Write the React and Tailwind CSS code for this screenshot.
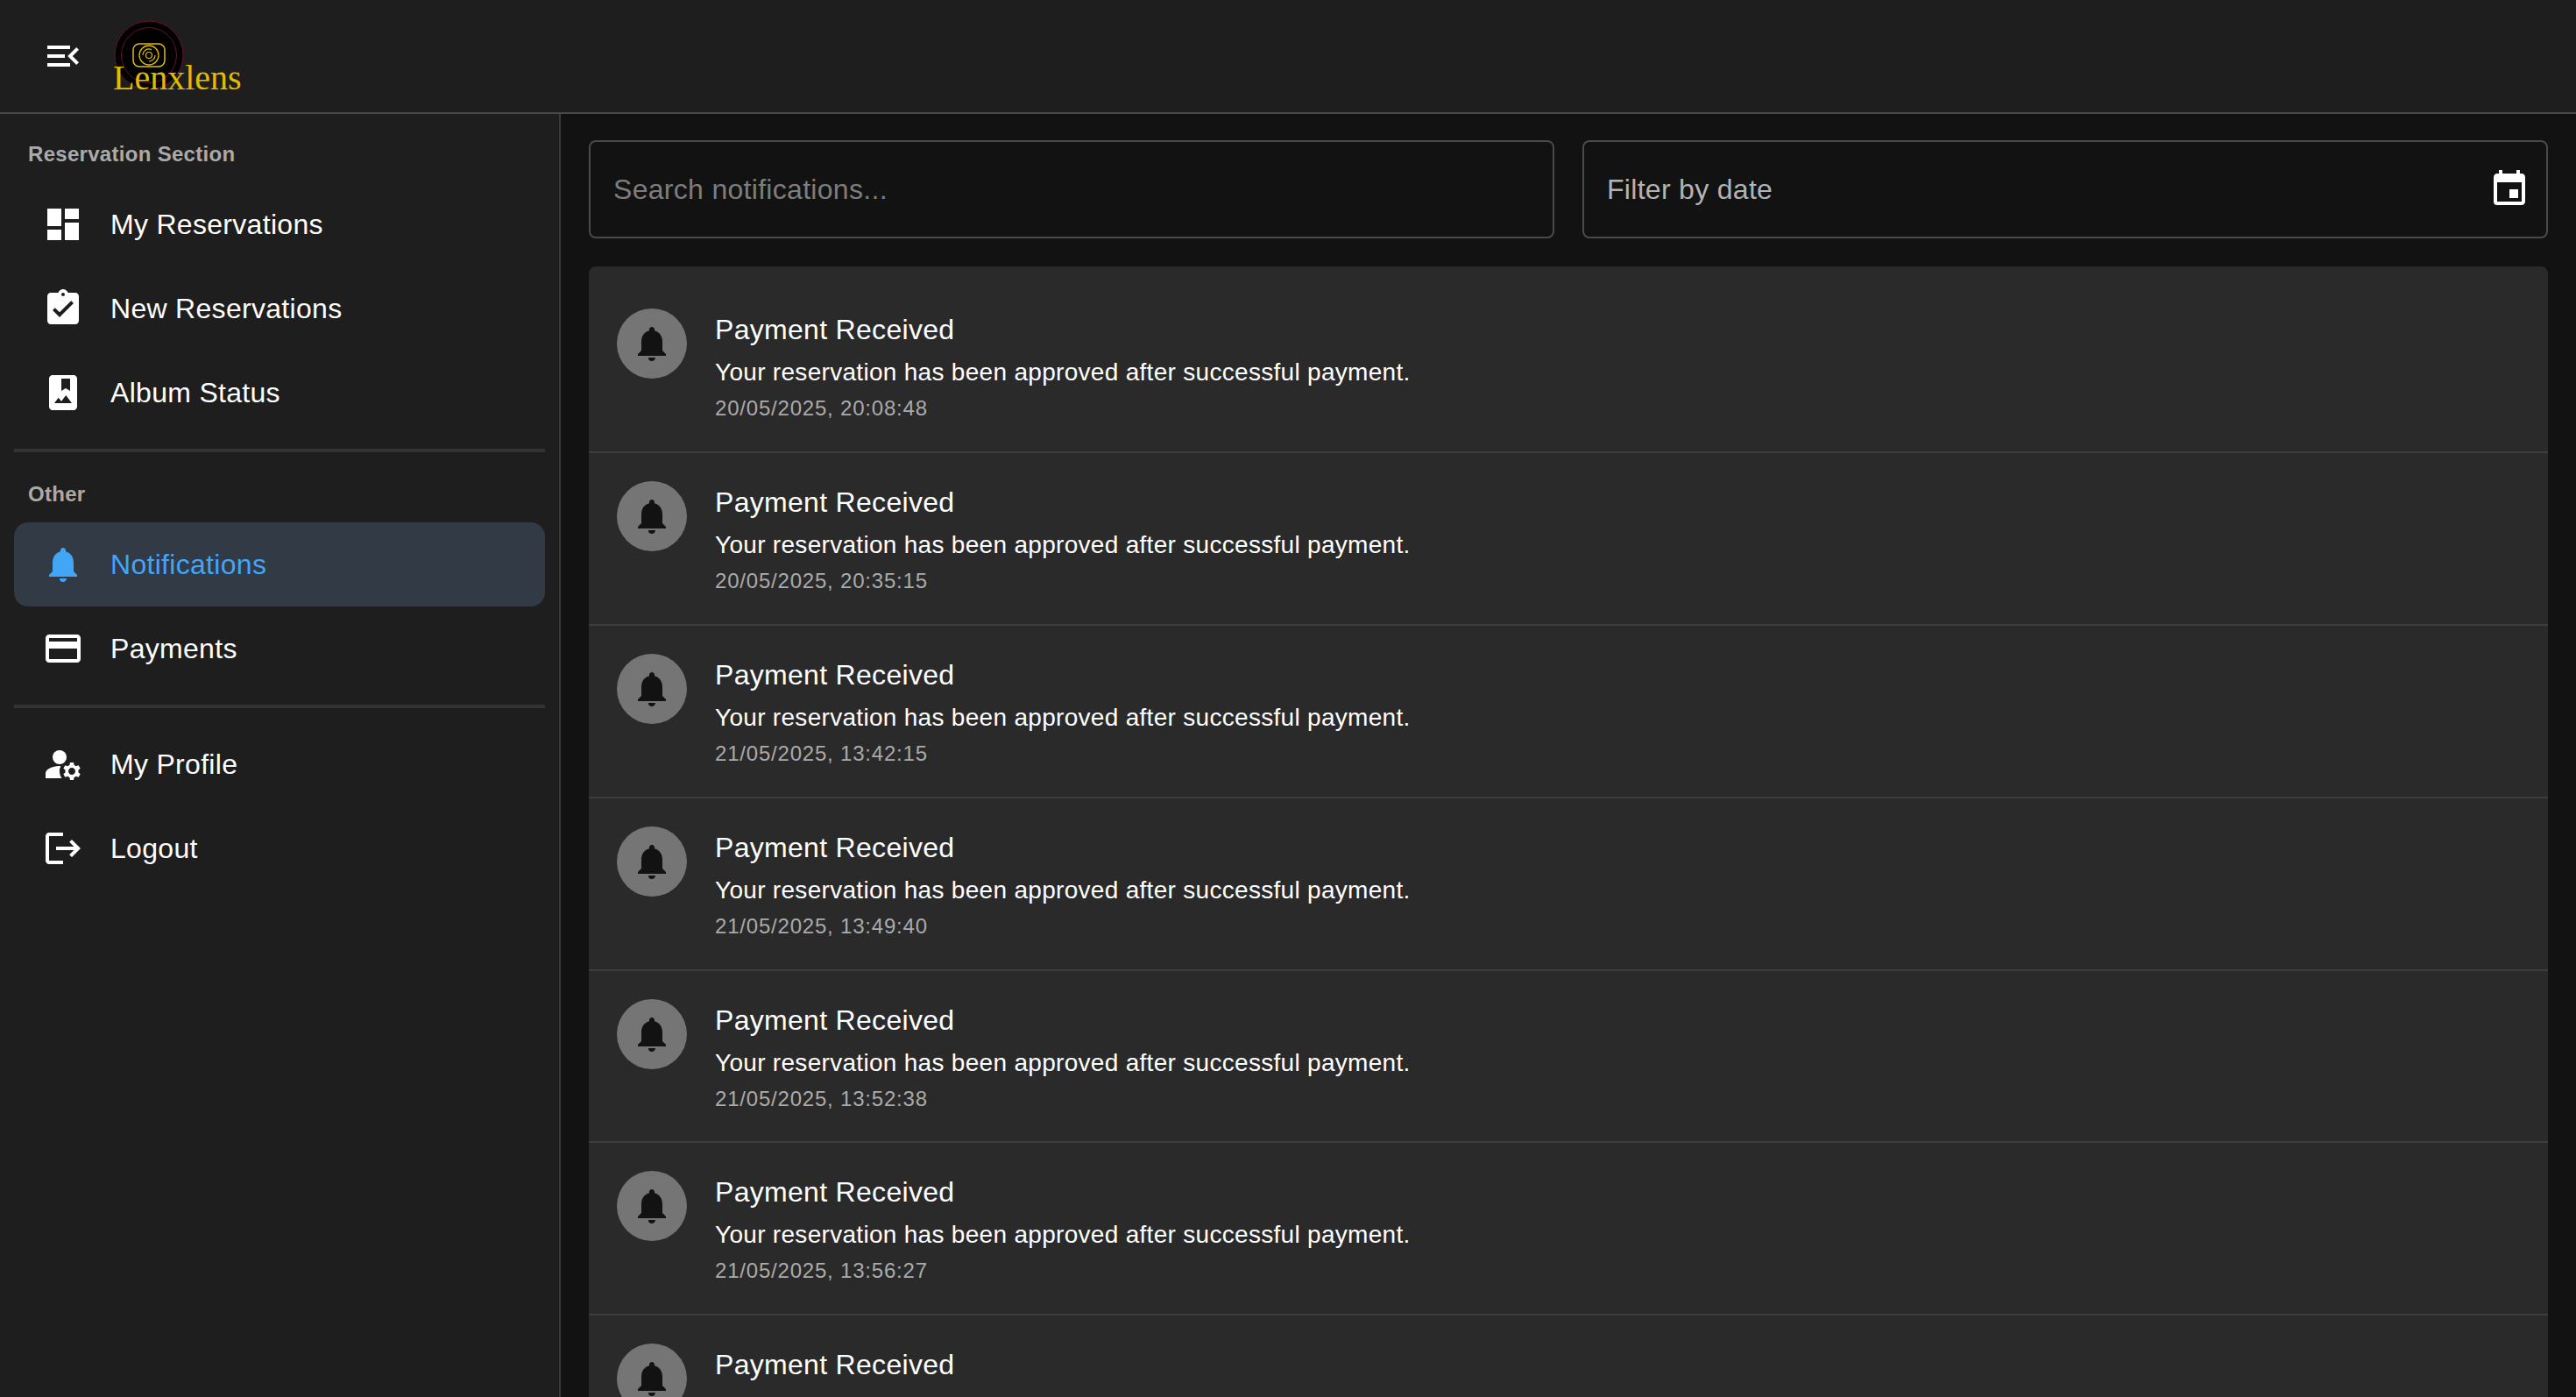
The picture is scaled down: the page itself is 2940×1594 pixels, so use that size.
import {
  MdMenuOpen,
  MdDashboard,
  MdAssignmentTurnedIn,
  MdPhotoAlbum,
  MdNotifications,
  MdCreditCard,
  MdManageAccounts,
  MdLogout,
  MdEvent,
} from 'react-icons/md';

const reservationLinks = [
  { label: 'My Reservations', Icon: MdDashboard },
  { label: 'New Reservations', Icon: MdAssignmentTurnedIn },
  { label: 'Album Status', Icon: MdPhotoAlbum },
];

const otherLinks = [
  { label: 'Notifications', Icon: MdNotifications, active: true },
  { label: 'Payments', Icon: MdCreditCard },
];

const accountLinks = [
  { label: 'My Profile', Icon: MdManageAccounts },
  { label: 'Logout', Icon: MdLogout },
];

const dates = [
  '20/05/2025, 20:08:48',
  '20/05/2025, 20:35:15',
  '21/05/2025, 13:42:15',
  '21/05/2025, 13:49:40',
  '21/05/2025, 13:52:38',
  '21/05/2025, 13:56:27',
  '21/05/2025, 14:01:12',
];

function Logo() {
  return (
    <div className="relative w-[150px] h-[82px]">
      <svg viewBox="0 0 80 80" className="w-[80px] h-[80px]" fill="none">
        <circle cx="40" cy="40" r="39" fill="#000" stroke="#6b0f2e" strokeWidth="1" />
        <circle cx="40" cy="40" r="31.5" stroke="#6b0f2e" strokeWidth="1" />
        <rect x="22" y="27" width="36" height="26" rx="7" stroke="#e0bd00" strokeWidth="1.5" />
        <circle cx="40" cy="40" r="11" stroke="#e0bd00" strokeWidth="1.3" />
        <path d="M33 40a7 7 0 0 1 10-6.3M47 40a7 7 0 0 1-7 7" stroke="#e0bd00" strokeWidth="1.2" />
        <circle cx="40" cy="40" r="3.5" stroke="#e0bd00" strokeWidth="1.2" />
      </svg>
      <span className="absolute left-[-1px] top-[42px] font-['Liberation_Serif',serif] text-[40px] leading-[48px] text-[#e0bd00]">
        Lenxlens
      </span>
    </div>
  );
}

function NavItem({ label, Icon, active }) {
  return (
    <div
      className={`mx-4 h-[96px] px-8 flex items-center rounded-2xl ${
        active ? 'bg-[#323a45] text-[#42a5f5]' : 'text-white'
      }`}
    >
      <Icon className="w-12 h-12 shrink-0 mr-[30px]" />
      <span className="text-[32px] leading-[48px] tracking-[0.3px]">{label}</span>
    </div>
  );
}

function SectionLabel({ children }) {
  return (
    <div className="pl-8 h-[48px] mb-2 flex items-center text-[24px] font-bold tracking-[0.3px] text-[#aaaaaa]">
      {children}
    </div>
  );
}

function NotificationRow({ date }) {
  return (
    <div className="h-[196.9px] px-8 pt-8 flex border-b-2 border-[#3d3d3d]">
      <div className="w-[80px] h-[80px] rounded-full bg-[#757575] flex items-center justify-center shrink-0 mr-8">
        <MdNotifications className="w-12 h-12 text-[#121212]" />
      </div>
      <div className="flex flex-col">
        <div className="text-[32px] leading-[48px] tracking-[0.3px] text-white">Payment Received</div>
        <div className="text-[28px] leading-[42px] tracking-[0.3px] text-white mt-1">
          Your reservation has been approved after successful payment.
        </div>
        <div className="text-[24px] leading-[40px] tracking-[0.8px] text-[#aaaaaa]">{date}</div>
      </div>
    </div>
  );
}

export default function App() {
  return (
    <div className="h-screen flex flex-col overflow-hidden bg-[#121212] font-['Liberation_Sans',Arial,sans-serif]">
      <header className="h-[130px] shrink-0 bg-[#1e1e1e] border-b-2 border-[#474747] flex items-center pl-12">
        <MdMenuOpen className="w-12 h-12 text-white mr-[34px]" />
        <Logo />
      </header>

      <div className="flex-1 min-h-0 flex">
        <aside className="w-[640px] shrink-0 bg-[#1e1e1e] border-r-2 border-[#3a3a3a] pt-[22px]">
          <SectionLabel>Reservation Section</SectionLabel>
          {reservationLinks.map((link) => (
            <NavItem key={link.label} {...link} />
          ))}
          <div className="mx-4 mt-4 h-1 bg-[#333333]" />
          <div className="mt-6">
            <SectionLabel>Other</SectionLabel>
          </div>
          {otherLinks.map((link) => (
            <NavItem key={link.label} {...link} />
          ))}
          <div className="mx-4 mt-4 mb-4 h-1 bg-[#333333]" />
          {accountLinks.map((link) => (
            <NavItem key={link.label} {...link} />
          ))}
        </aside>

        <main className="flex-1 min-w-0 pt-[30px] pl-8 pr-8">
          <div className="grid grid-cols-2 gap-8 mb-8">
            <input
              className="w-full h-[112px] px-[26px] rounded-lg border-2 border-[#4a4a4a] bg-transparent text-[32px] tracking-[0.3px] text-white placeholder-[#7d7d7d] outline-none"
              placeholder="Search notifications..."
            />
            <div className="h-[112px] pl-[26px] pr-[18px] rounded-lg border-2 border-[#4a4a4a] flex items-center justify-between">
              <span className="text-[32px] tracking-[0.3px] text-[#b3b3b3]">Filter by date</span>
              <MdEvent className="w-12 h-12 text-white" />
            </div>
          </div>
          <div className="bg-[#2a2a2a] rounded-lg pt-4">
            {dates.map((date, i) => (
              <NotificationRow key={i} date={date} />
            ))}
          </div>
        </main>
      </div>
    </div>
  );
}
